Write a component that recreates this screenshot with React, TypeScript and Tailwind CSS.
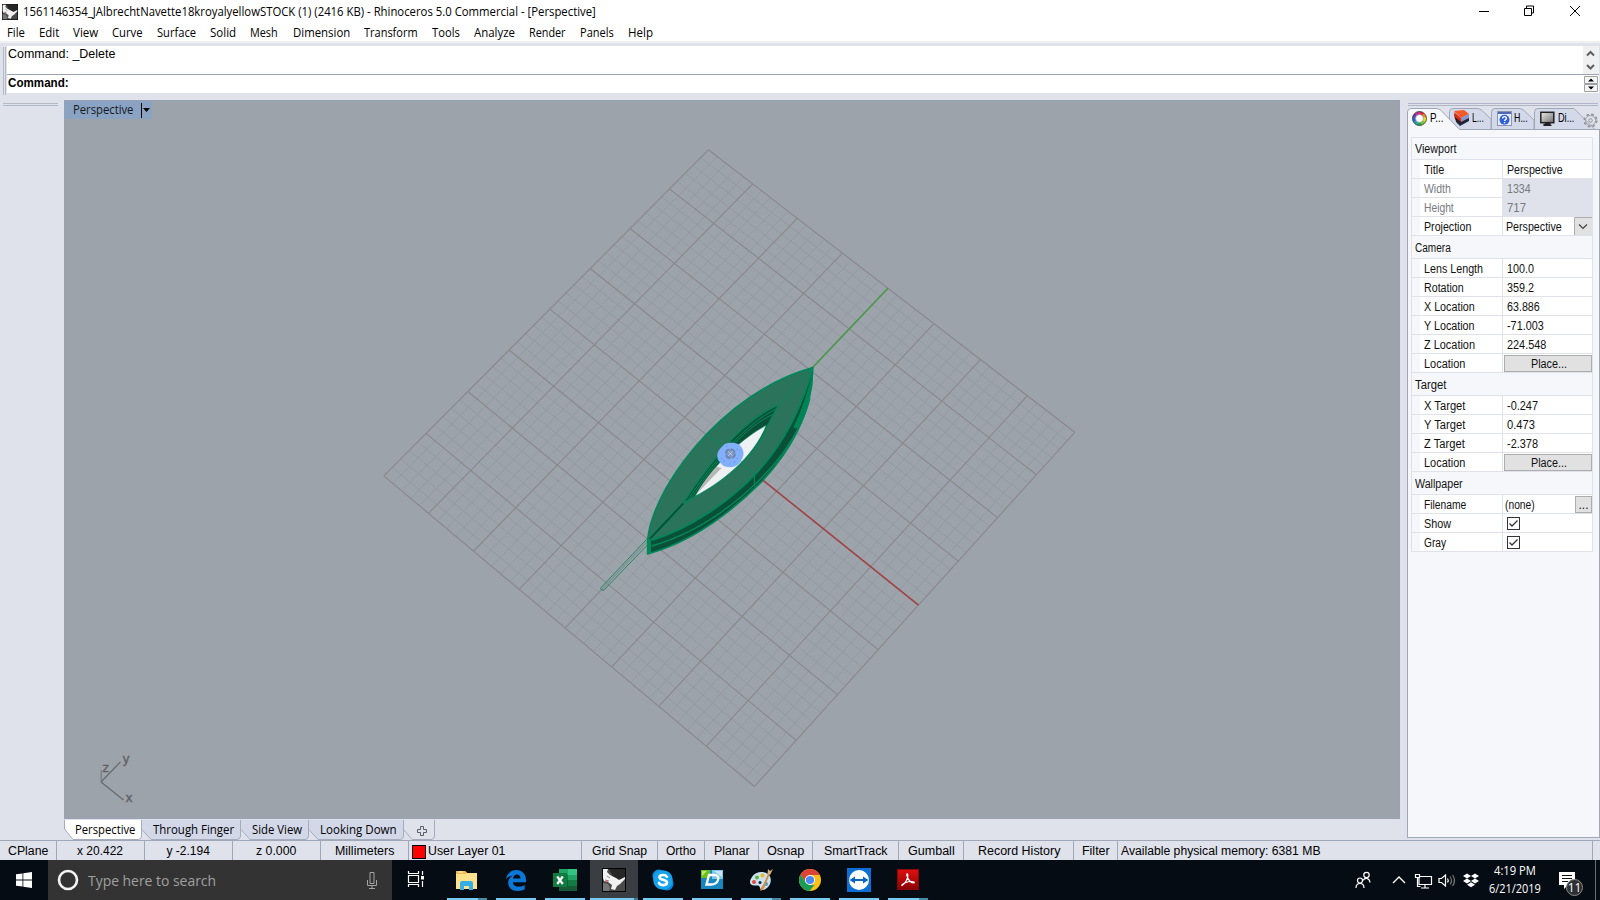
import React, { useLayoutEffect, useRef, useState } from "react";

const UI = "font-['Open_Sans','Noto_Sans',sans-serif]";
const ARIAL = "font-['Liberation_Sans',Arial,sans-serif]";

/* One line of text that is condensed or widened to a given advance width. */
function Label({ w, className = "", children }: { w: number; className?: string; children: string }) {
  const ref = useRef<HTMLSpanElement>(null);
  const [k, setK] = useState(1);
  useLayoutEffect(() => {
    if (ref.current) setK(w / ref.current.offsetWidth);
  }, [w, children]);
  return (
    <span className={"inline-block shrink-0 whitespace-nowrap " + className} style={{ width: w }}>
      <span ref={ref} className="inline-block origin-left" style={{ transform: `scaleX(${k})` }}>
        {children}
      </span>
    </span>
  );
}

/* ---------- icons ---------- */
function RhinoIcon({ size }: { size: number }) {
  return (
    <svg width={size} height={size} viewBox="0 0 24 24" className="shrink-0">
      <rect width="24" height="24" fill="#050505" />
      <rect x="1" y="1" width="22" height="22" fill="#4a4a4a" />
      <path d="M7 1H23V12L12 11Z" fill="#262626" />
      <path d="M1 1H6L5 4L8 7L14 10L17 12L23 9V11L18 16L15 18L13 22L9 21L10 17L6 14L2 13L1 10Z" fill="#f1f1f1" />
      <path d="M1 15L6 16L8 20L7 23H1Z" fill="#777" />
      <path d="M3 12l4 1M5 8l3 2" stroke="#8b8b8b" fill="none" />
      <circle cx="5" cy="13" r="1" fill="#d66" />
    </svg>
  );
}
const ColorRing = () => (
  <svg width="15" height="15" viewBox="-7.5 -7.5 15 15" fill="none" strokeWidth="3" className="shrink-0">
    {["#e8262a", "#f08a1c", "#f3e01c", "#7ccb28", "#1fa94a", "#18a5b8", "#2a5bd0", "#6a36b8", "#c02a9a"].map((c, i) => (
      <path key={c} d="M0 -5.5A5.5 5.5 0 0 1 3.8 -4" stroke={c} transform={`rotate(${i * 40})`} />
    ))}
    <circle r="7" stroke="#333" strokeWidth=".8" />
    <circle r="4" fill="#fff" stroke="#555" strokeWidth=".5" />
  </svg>
);
const LayersIcon = () => (
  <svg width="16" height="16" viewBox="0 0 16 16" className="shrink-0">
    <path d="M1 7L6 12L15 8V11L6 16L2 12Z" fill="#1d2740" />
    <path d="M0 4L6 9L15 5V9L6 13L1 9Z" fill="#3a1410" />
    <path d="M0 1L10 0L15 4L7 8Z" fill="#f25a2a" />
    <path d="M0 2L7 8V12L1 7Z" fill="#d92c14" />
    <path d="M7 8L15 4V8L7 12Z" fill="#8199d0" />
  </svg>
);
const HelpIcon = () => (
  <svg width="15" height="15" viewBox="0 0 15 15" className="shrink-0">
    <rect x=".5" y=".5" width="14" height="14" fill="#e8eefb" stroke="#8a94b0" />
    <rect x="1" y="1" width="13" height="2" fill="#4c66b8" />
    <circle cx="7.5" cy="8.7" r="5" fill="#2f5fd8" />
    <path d="M5.6 7.4C5.6 5 9.4 5 9.4 7.3C9.4 8.7 7.6 8.5 7.6 10M7.6 11v1.3" fill="none" stroke="#fff" strokeWidth="1.4" />
  </svg>
);
const MonitorIcon = () => (
  <svg width="15" height="15" viewBox="0 0 15 15" className="shrink-0">
    <defs>
      <linearGradient id="mon" x1="0" y1="0" x2="1" y2="1">
        <stop offset="0" stopColor="#eee" />
        <stop offset="1" stopColor="#6d6d6d" />
      </linearGradient>
    </defs>
    <rect x=".8" y="1.3" width="13" height="10.4" fill="url(#mon)" stroke="#222" strokeWidth="1.5" />
    <path d="M5 12.3h5v1H4v1h7.5" fill="none" stroke="#222" strokeWidth="1.2" />
  </svg>
);
const GearIcon = () => (
  <svg width="15" height="15" viewBox="-7.5 -7.5 15 15" fill="none" stroke="#8f9196" className="shrink-0">
    <circle r="6.2" strokeWidth="1.6" strokeDasharray="2.6 2.27" />
    <circle r="5" strokeWidth=".8" />
    <circle r="1.8" />
  </svg>
);

/* ---------- top ---------- */
function TitleBar() {
  return (
    <div className={`flex h-[23px] items-center bg-white pl-[2px] text-[12px] text-black ${UI}`}>
      <RhinoIcon size={16} />
      <Label w={573} className="ml-[5px]">
        1561146354_JAlbrechtNavette18kroyalyellowSTOCK (1) (2416 KB) - Rhinoceros 5.0 Commercial - [Perspective]
      </Label>
      <svg width="106" height="20" viewBox="1474 0 106 20" className="mr-[20px] ml-auto" fill="none" stroke="#000">
        <path d="M1479 9.500h10M1524.500 6.500h7v7h-7zM1526.500 6v-2h7v7h-2M1570 4l10 10M1580 4l-10 10" />
      </svg>
    </div>
  );
}

const menu: [string, number, number][] = [
  ["File", 7, 18], ["Edit", 39, 20], ["View", 73, 25], ["Curve", 112, 31], ["Surface", 157, 39],
  ["Solid", 210, 26], ["Mesh", 250, 28], ["Dimension", 293, 57], ["Transform", 364, 54], ["Tools", 432, 28],
  ["Analyze", 474, 41], ["Render", 529, 37], ["Panels", 580, 34], ["Help", 628, 25],
];
function MenuBar() {
  return (
    <div className={`flex h-[18px] items-center bg-white pt-px text-[12px] leading-[17px] text-black ${UI}`}>
      {menu.map(([t, x, w], i) => {
        const prev = i ? menu[i - 1][1] + menu[i - 1][2] : 0;
        return (
          <div key={t} className="flex shrink-0" style={{ paddingLeft: x - prev }}>
            <Label w={w}>{t}</Label>
          </div>
        );
      })}
    </div>
  );
}

function CommandArea() {
  return (
    <div className="flex h-[59px] flex-col border-t-2 border-[#f0f0f0]">
      <div className="mt-[3px] flex h-[49px]">
        <div className="mt-px ml-[3px] h-[48px] w-[3px] shrink-0 border-x border-[#b4b9c6]" />
        <div className={`ml-[1px] flex w-[1592px] flex-col text-[12px] text-black ${ARIAL}`}>
          <div className="flex h-[28px] justify-between bg-white">
            <Label w={107} className="ml-[1px] leading-[17px]">Command: _Delete</Label>
            <svg width="16" height="28" viewBox="0 0 16 28" className="bg-[#f0f0f0]" fill="none" stroke="#606060" strokeWidth="2">
              <path d="M4 9.500L7.500 6L11 9.500M4 19L7.500 22.500L11 19" />
            </svg>
          </div>
          <div className="flex h-[19px] justify-between border-t border-[#98a2b0] bg-white">
            <Label w={61} className="ml-[1px] font-bold leading-[17px]">Command:</Label>
            <svg width="16" height="18" viewBox="0 0 16 18">
              <path d="M1.500 1.500h13v7h-13zM1.500 9.500h13v7h-13z" fill="#f4f4f4" stroke="#a0a0a0" />
              <path d="M5 6.500h6L8 3.500zM5 11.500h6L8 14.500z" fill="#000" />
            </svg>
          </div>
        </div>
      </div>
    </div>
  );
}

/* ---------- viewport ---------- */
/* Projects the unit square onto the quadrilateral p0 (0,0), p1 (1,0), p2 (1,1), p3 (0,1). */
type P = [number, number];
function projector(p0: P, p1: P, p2: P, p3: P) {
  const dx1 = p1[0] - p2[0], dx2 = p3[0] - p2[0], dx3 = p0[0] - p1[0] + p2[0] - p3[0];
  const dy1 = p1[1] - p2[1], dy2 = p3[1] - p2[1], dy3 = p0[1] - p1[1] + p2[1] - p3[1];
  const det = dx1 * dy2 - dx2 * dy1;
  const g = (dx3 * dy2 - dx2 * dy3) / det, h = (dx1 * dy3 - dx3 * dy1) / det;
  const a = p1[0] - p0[0] + g * p1[0], b = p3[0] - p0[0] + h * p3[0];
  const d = p1[1] - p0[1] + g * p1[1], e = p3[1] - p0[1] + h * p3[1];
  return (u: number, v: number): P => {
    const q = g * u + h * v + 1;
    return [(a * u + b * v + p0[0]) / q, (d * u + e * v + p0[1]) / q];
  };
}
const project = projector([383.8, 475.9], [754.4, 786.5], [1074.8, 432.3], [708.4, 149.8]);
const seg = (u1: number, v1: number, u2: number, v2: number) => {
  const [x1, y1] = project(u1, v1);
  const [x2, y2] = project(u2, v2);
  return `M${x1.toFixed(2)} ${y1.toFixed(2)}L${x2.toFixed(2)} ${y2.toFixed(2)}`;
};
const steps = Array.from({ length: 41 }, (_, i) => i);
const lines = (major: boolean) =>
  steps.filter((i) => (i % 5 === 0) === major).map((i) => seg(i / 40, 0, i / 40, 1) + seg(0, i / 40, 1, i / 40)).join("");

function Model() {
  return (
    <g transform="translate(580 340) scale(.33333)" fill="none" strokeLinejoin="round">
      <path d="M200 598L63 743Q60 752 72 750L205 612" stroke="#1d8a60" strokeWidth="3" />
      <path d="M203 604L72 743" stroke="#6f9a8c" strokeWidth="2" />
      <path d="M698 83C700 220 625 340 545 425C440 530 330 607 203 642L203 597Z" fill="#0a5038" stroke="#00875a" strokeWidth="5" />
      <path d="M690 175C665 270 610 350 530 428C440 515 330 585 215 618" stroke="#058a5b" strokeWidth="4" />
      <path d="M698 90C698 150 685 212 655 268L640 262C668 205 685 150 698 90Z" fill="#008456" />
      <path d="M698 83C560 122 460 200 380 282C285 382 215 500 203 597L218 600C330 565 440 490 523 406C600 325 660 225 698 83Z" fill="#2c735b" stroke="#00875a" strokeWidth="5" />
      <path d="M595 195C520 225 450 300 412 348C370 402 335 445 310 490L345 470C430 425 530 345 560 262Z" fill="#0a5038" stroke="#058458" strokeWidth="4" />
      <path d="M577 224C500 260 410 355 330 482M586 208C500 250 400 360 320 486" stroke="#058a5b" strokeWidth="3" />
      <path d="M559 256C500 285 400 370 345 469C420 430 520 355 559 256Z" fill="#eef1f3" stroke="#058458" strokeWidth="2" />
      <path d="M410 380C385 408 365 435 350 462L395 415L425 384Z" fill="#b9b7b5" />
      <path d="M310 490L207 600" stroke="#0a5038" strokeWidth="6" />
      <path d="M302 490L207 590M314 496L214 598M698 83L595 195M380 282L432 322M482 364L523 404V440" stroke="#058a5b" strokeWidth="3" />
      <path d="M208 596V640" stroke="#00875a" strokeWidth="10" />
      <path d="M432 314C440 307 465 306 478 314C495 330 494 350 480 366C470 385 437 387 424 372C405 352 408 334 432 314Z" fill="#82b0fa" />
      <circle cx="451" cy="341" r="14" fill="#7f95ba" stroke="#6a84b4" strokeWidth="5" strokeDasharray="16 6" />
      <path d="M444 334l14 14M458 334l-14 14" stroke="#b4cdf8" strokeWidth="3" />
      <path d="M470 328h4M478 332h3M424 355h3M430 364h4M462 366h4M438 320h3M470 356h3M448 372h3" stroke="#5f8edb" strokeWidth="3" />
    </g>
  );
}

function Viewport() {
  return (
    <div className="relative h-[719px] w-[1336px] shrink-0 border border-[#98a1b3] bg-[#9da3ab]">
      <svg width="1334" height="717" viewBox="65 101 1334 717" fill="none">
        <path d={lines(false)} stroke="#949aa1" strokeWidth="1" />
        <path d={lines(true)} stroke="#89868d" strokeWidth="1.1" />
        <path d={seg(0.5, 0.5, 1, 0.5)} stroke="#a04344" strokeWidth="1.6" />
        <path d={seg(0.5, 0.5, 0.5, 1)} stroke="#4a9a48" strokeWidth="1.6" />
        <Model />
        <path d="M101.300 782V770" stroke="#7f8287" strokeWidth="1.600" />
        <path d="M101 782L120.500 761.800M101 782L123.500 800" stroke="#66696e" strokeWidth="1.200" />
        <g className="font-['DejaVu_Sans',sans-serif] text-[12px]" fill="#5f6267" stroke="#5f6267" strokeWidth=".4">
          <text x="122.500" y="763">y</text>
          <text x="102.500" y="772">z</text>
          <text x="125.500" y="802">x</text>
        </g>
      </svg>
      <div className={`absolute top-0 left-0 flex h-[18px] w-[87px] items-center bg-[#8aa3c3] text-[12px] text-[#15181d] ${UI}`}>
        <Label w={60} className="ml-[8px] leading-[16px]">Perspective</Label>
        <svg width="10" height="16" viewBox="0 0 10 16" className="ml-[8px]">
          <path d="M.500 1v15" stroke="#000" />
          <path d="M2 6h7L5.500 10z" fill="#000" />
        </svg>
      </div>
    </div>
  );
}

const viewTabs: [string, number, number][] = [
  ["Perspective", 78, 60], ["Through Finger", 99, 81], ["Side View", 68, 50], ["Looking Down", 95, 77],
];
function ViewTabs() {
  return (
    <div className={`mt-px flex h-[20px] text-[12px] text-black ${UI}`}>
      {viewTabs.map(([t, w, tw], i) => (
        <div key={t} className="relative flex h-[20px] shrink-0 justify-end" style={{ width: w }}>
          <svg width={w} height="20" className="absolute inset-0" fill="none">
            <path
              d={`M${i ? 0 : 0.5} 0V8L${i ? 9 : 8.5} 19.500H${w - 4}Q${w - 0.5} 19.500 ${w - 0.5} 16V0Z`}
              fill={i ? "#d3d8e8" : "#fff"}
            />
            <path d={`M${i ? -0.5 : 0.5} ${i ? 10 : 0}V9L9 19.500H${w - 4}Q${w - 0.5} 19.500 ${w - 0.5} 16V0`} stroke="#a5acbb" />
          </svg>
          <Label w={tw} className="relative mr-[7px] leading-[20px]">{t}</Label>
        </div>
      ))}
      <svg width="31" height="20" viewBox="0 0 31 20" fill="none" stroke="#a5acbb">
        <path d="M0 10L8 19.500H27Q30.500 19.500 30.500 16V0" />
        <path d="M16.500 6.500h3v3h3v3h-3v3h-3v-3h-3v-3h3z" stroke="#5a5d62" />
      </svg>
    </div>
  );
}

/* ---------- properties panel ---------- */
function PanelTabs() {
  return (
    <div className="relative h-[22px]">
      <svg width="193" height="22" viewBox="1407 108 193 22" className="absolute inset-0" fill="#d3d9e9" stroke="#a0a8b8">
        <path d="M1534.500 130V112Q1534.500 108.500 1538 108.500H1574L1595 129.500" />
        <path d="M1491.500 130V112Q1491.500 108.500 1495 108.500H1519Q1522 108.500 1524 110.500L1534 120V130" />
        <path d="M1449.500 130V112Q1449.500 108.500 1453 108.500H1477Q1480 108.500 1482 110.500L1491 119V130" />
        <path d="M1400 129.500H1600" />
        <path d="M1407.500 131V112Q1407.500 108.500 1411 108.500H1436Q1439 108.500 1441 110.500L1459.500 129.500L1460 131" fill="#f6f7fa" />
      </svg>
      <div className={`relative flex h-[20px] items-center pl-px text-[12px] text-black ${ARIAL}`}>
        <div className="flex w-[42px] items-center gap-[3px] pl-[4px]"><ColorRing /><Label w={13}>P...</Label></div>
        <div className="flex w-[42px] items-center gap-[2px] pl-[4px]"><LayersIcon /><Label w={12}>L...</Label></div>
        <div className="flex w-[42px] items-center gap-[2px] pl-[5px]"><HelpIcon /><Label w={14}>H...</Label></div>
        <div className="flex w-[49px] items-center gap-[3px] pl-[6px]"><MonitorIcon /><Label w={16}>Di...</Label></div>
        <div className="flex pt-[5px]"><GearIcon /></div>
      </div>
    </div>
  );
}

type Row = { l: string; lw: number; v?: string; vw?: number; kind?: "gray" | "combo" | "button" | "file" | "check" };
const groups: { name: string; w: number; rows: Row[] }[] = [
  {
    name: "Viewport", w: 41, rows: [
      { l: "Title", lw: 20, v: "Perspective", vw: 56 },
      { l: "Width", lw: 27, v: "1334", vw: 24, kind: "gray" },
      { l: "Height", lw: 30, v: "717", vw: 19, kind: "gray" },
      { l: "Projection", lw: 47, v: "Perspective", vw: 56, kind: "combo" },
    ],
  },
  {
    name: "Camera", w: 36, rows: [
      { l: "Lens Length", lw: 59, v: "100.0", vw: 27 },
      { l: "Rotation", lw: 40, v: "359.2", vw: 27 },
      { l: "X Location", lw: 51, v: "63.886", vw: 33 },
      { l: "Y Location", lw: 51, v: "-71.003", vw: 37 },
      { l: "Z Location", lw: 51, v: "224.548", vw: 39 },
      { l: "Location", lw: 41, v: "Place...", vw: 36, kind: "button" },
    ],
  },
  {
    name: "Target", w: 31, rows: [
      { l: "X Target", lw: 41, v: "-0.247", vw: 31 },
      { l: "Y Target", lw: 41, v: "0.473", vw: 28 },
      { l: "Z Target", lw: 41, v: "-2.378", vw: 31 },
      { l: "Location", lw: 41, v: "Place...", vw: 36, kind: "button" },
    ],
  },
  {
    name: "Wallpaper", w: 48, rows: [
      { l: "Filename", lw: 42, v: "(none)", vw: 30, kind: "file" },
      { l: "Show", lw: 27, kind: "check" },
      { l: "Gray", lw: 22, kind: "check" },
    ],
  },
];

function Value({ r }: { r: Row }) {
  const text = r.v ? <Label w={r.vw!}>{r.v}</Label> : null;
  switch (r.kind) {
    case "gray":
      return <div className="flex h-[19px] flex-1 items-center bg-[#dfe2eb] pl-[4px] text-[#76797e]">{text}</div>;
    case "combo":
      return (
        <div className="flex flex-1 items-center justify-between pl-[3px]">
          <div className="flex pt-[2px]">{text}</div>
          <svg width="18" height="18" viewBox="0 0 18 18">
            <path d="M1 1H18V18H1z" fill="#e1e1e1" />
            <path d="M.500 18V.500H18" fill="none" stroke="#adadad" />
            <path d="M5 7.500L9 11.500L13 7.500" fill="none" stroke="#444" strokeWidth="1.200" />
          </svg>
        </div>
      );
    case "button":
      return (
        <div className="mt-px ml-[1px] flex h-[17px] flex-1 items-center justify-center border border-[#adadad] bg-[#e1e1e1]">
          <div className="flex pl-[2px]">{text}</div>
        </div>
      );
    case "file":
      return (
        <div className="flex flex-1 items-center justify-between pl-[2px]">
          <div className="flex pt-[2px]">{text}</div>
          <div className="mt-px flex h-[17px] w-[17px] items-center justify-center border border-[#adadad] bg-[#e1e1e1] leading-[10px]">...</div>
        </div>
      );
    case "check":
      return (
        <svg width="13" height="13" viewBox="0 0 13 13" className="mt-[3px] ml-[4px]" fill="none" stroke="#333">
          <rect x=".5" y=".5" width="12" height="12" fill="#fff" />
          <path d="M2.500 6.500L5 9L10.500 3.500" strokeWidth="1.300" />
        </svg>
      );
    default:
      return <div className="flex flex-1 items-center pt-[2px] pl-[4px]">{text}</div>;
  }
}

function PropertiesPanel() {
  return (
    <div className="mt-[3px] ml-[7px] flex h-[735px] w-[193px] flex-col">
      <div className="mb-[2px] ml-px h-[3px] w-[190px] border-y border-[#b0b6c6]" />
      <PanelTabs />
      <div className={`h-[708px] w-[193px] border-x border-b border-[#a0a8b8] bg-[#f6f7fa] pt-[7px] pl-[3px] text-[12px] leading-[14px] text-[#111] ${ARIAL}`}>
        <div className="w-[182px] border-x border-t border-[#dfe2eb]">
          {groups.map((g, gi) => (
            <div key={g.name}>
              <div className={(gi ? "h-[23px] pt-[2px]" : "h-[22px]") + " flex items-center border-b border-[#dfe2eb] pl-[3px]"}>
                <Label w={g.w}>{g.name}</Label>
              </div>
              {g.rows.map((r) => (
                <div key={r.l} className="flex h-[19px] border-b border-[#dfe2eb]">
                  <div className="w-[8px] shrink-0" />
                  <div className={"flex w-[83px] shrink-0 items-center border-r border-[#dfe2eb] bg-white pt-[2px] pl-[4px]" + (r.kind === "gray" ? " text-[#76797e]" : "")}>
                    <Label w={r.lw}>{r.l}</Label>
                  </div>
                  <div className="flex flex-1 bg-white"><Value r={r} /></div>
                </div>
              ))}
            </div>
          ))}
        </div>
      </div>
    </div>
  );
}

/* ---------- status bar ---------- */
const cells: [string, number, number][] = [
  ["CPlane", 57, 40], ["x 20.422", 88, 46], ["y -2.194", 88, 43], ["z 0.000", 88, 40], ["Millimeters", 88, 59],
  ["User Layer 01", 173, 77], ["Grid Snap", 76, 55], ["Ortho", 47, 30], ["Planar", 54, 36], ["Osnap", 54, 37],
  ["SmartTrack", 86, 64], ["Gumball", 65, 47], ["Record History", 110, 82], ["Filter", 44, 28],
  ["Available physical memory: 6381 MB", 475, 200],
];
function StatusBar() {
  return (
    <div className={`flex h-[20px] border-t border-[#a0a8b8] text-[12px] text-black ${ARIAL}`}>
      {cells.map(([t, w, tw], i) => {
        const layer = t.startsWith("User");
        const left = layer || t.startsWith("Avail");
        return (
          <div
            key={t}
            className={"flex shrink-0 items-center border-r border-[#a0a8b8] " + (left ? "pl-[3px]" : i < 5 ? "justify-center pr-px" : "justify-center")}
            style={{ width: w }}
          >
            {layer && <div className="mt-[3px] mr-[2px] h-[14px] w-[14px] border border-black bg-[#f00]" />}
            <Label w={tw}>{t}</Label>
          </div>
        );
      })}
    </div>
  );
}

/* ---------- taskbar ---------- */
const Explorer = () => (
  <svg width="24" height="24" viewBox="0 0 24 24">
    <path d="M1 3h9l2 2h10v16H1z" fill="#ffe08c" />
    <path d="M1 3h9l2 2-2 1H1z" fill="#f5b942" />
    <path d="M3 4h5" stroke="#fff" />
    <path d="M5 22v-7q0-2 2-2h9q2 0 2 2v7h-4v-4h-5v4z" fill="#35b0e6" />
  </svg>
);
const Edge = () => (
  <svg width="24" height="24" viewBox="0 0 24 24">
    <path
      d="M2 11.500C3 5.500 7 2 12.300 2C18.500 2 22 6.500 22 12V14.300H8.800C9 17.300 11.600 18.700 14.500 18.700C17 18.700 19 18 20.700 17V21.300C18.800 22.300 16.500 23 13.700 23C8 23 4.200 19.500 4.200 14.500C4.200 11.500 6 9 8.500 7.700C5.500 8 3.200 9.500 2 11.500ZM9 10.500H16.500C16.500 8 15 6.600 12.900 6.600C10.700 6.600 9.300 8.300 9 10.500Z"
      fill="#0a78d7"
    />
  </svg>
);
const Excel = () => (
  <svg width="24" height="24" viewBox="0 0 24 24">
    <path d="M6 1h9v6H6z" fill="#21a366" /><path d="M15 1h9v6h-9z" fill="#33c481" />
    <path d="M6 7h9v6H6z" fill="#107c41" /><path d="M15 7h9v5h-9z" fill="#21a366" />
    <path d="M6 12h9v11H6z" fill="#185c37" /><path d="M15 12h9v6h-9z" fill="#107c41" /><path d="M15 18h9v5h-9z" fill="#185c37" />
    <rect y="5" width="14" height="14" fill="#107c41" />
    <path d="M4.200 8.500l5.600 7.500M9.800 8.500l-5.600 7.500" stroke="#fff" strokeWidth="2.200" />
  </svg>
);
const Skype = () => (
  <svg width="24" height="24" viewBox="0 0 24 24">
    <circle cx="8" cy="8" r="6.500" fill="#1292e0" /><circle cx="16" cy="16" r="6.500" fill="#0a86dc" />
    <circle cx="12" cy="12" r="9.800" fill="#14a3ec" />
    <path d="M15.800 8.700C14.500 6.400 8.500 6.300 8.500 9.300C8.500 12.600 16 11 16 14.600C16 18 9.300 17.800 8 15" fill="none" stroke="#fff" strokeWidth="2.700" strokeLinecap="round" />
  </svg>
);
const Designer = () => (
  <svg width="24" height="24" viewBox="0 0 24 24">
    <rect x="1" y="2" width="22" height="19" fill="#1a86c0" />
    <path d="M12 2h11v9H12z" fill="#7cc8e8" /><path d="M14 3h8v6z" fill="#c6e8f6" />
    <rect x="1" y="2" width="9" height="8" fill="#6bbf1e" /><path d="M2 3h5l-5 5z" fill="#b8ec6a" />
    <path d="M9 7H14C18 7 19 9 18 12C17 15 14.500 16.500 11 16.500H6.500Z" fill="none" stroke="#fff" strokeWidth="2.300" />
  </svg>
);
const Paint = () => (
  <svg width="24" height="24" viewBox="0 0 24 24">
    <path d="M3 9C6 4 15 2 20 7C24 12 21 20 14 22C10 22.500 12 18 9 17.500C6 17.500 1 18 1 14C1 12 2 10.500 3 9Z" fill="#c9e2f2" />
    <circle cx="5" cy="14" r="2" fill="#e2483c" /><circle cx="8" cy="9.500" r="2" fill="#5cb531" /><circle cx="13.500" cy="7.500" r="2" fill="#f0b429" />
    <circle cx="11" cy="14.500" r="1.500" fill="#14243a" /><circle cx="17" cy="16" r="2" fill="#3aa0dc" />
    <path d="M11.500 23C11 20 13 19 14.500 16L19 6L20.500 6.500L16.500 17C15.500 20 14 22 11.500 23Z" fill="#d98a3c" />
    <path d="M18.500 6L19 1L21 3L24 1L22.500 4L21 7Z" fill="#d8b078" />
  </svg>
);
const Chrome = () => (
  <svg width="24" height="24" viewBox="-12 -12 24 24">
    <circle r="11" fill="#fbc116" />
    <path d="M-9.530 -5.500A11 11 0 0 1 9.530 -5.500L10 -5H0L-4.330 2.500Z" fill="#dc4437" />
    <path d="M-9.530 -5.500L-4.330 2.500L0 5H4.500L-.5 11A11 11 0 0 1 -9.530 -5.500Z" fill="#1a9c56" />
    <circle r="5" fill="#fff" /><circle r="4.100" fill="#4a8af4" />
  </svg>
);
const TeamViewer = () => (
  <svg width="24" height="24" viewBox="0 0 24 24">
    <rect width="24" height="24" fill="#0b6fd6" /><circle cx="12" cy="12" r="10" fill="#fff" />
    <path d="M2.500 12L8 8.500V11H16V8.500L21.500 12L16 15.500V13H8V15.500Z" fill="#0b63c4" />
  </svg>
);
const Acrobat = () => (
  <svg width="24" height="24" viewBox="0 0 24 24">
    <defs><linearGradient id="acr" x1="0" y1="0" x2="0" y2="1"><stop offset="0" stopColor="#e01010" /><stop offset="1" stopColor="#8a0000" /></linearGradient></defs>
    <rect x="1.500" y="1.500" width="21" height="20" fill="url(#acr)" stroke="#8c0808" />
    <path d="M6 17.500C9 16 12.500 10 11.800 6.500C11.300 5 10.300 6 11 8C12 12 15 15 18 15C19 14.500 18 13.300 15 13.500C12 13.700 8 15 6.300 16.500C5.500 17.500 5.700 17.700 6 17.500Z" fill="none" stroke="#fff" strokeWidth="1.200" />
  </svg>
);

const apps: { icon: React.ReactNode; w: number; bar: number; dim?: boolean; active?: boolean }[] = [
  { icon: <Explorer />, w: 49, bar: 40, dim: true },
  { icon: <Edge />, w: 49, bar: 40 },
  { icon: <Excel />, w: 45, bar: 40 },
  { icon: <RhinoIcon size={24} />, w: 53, bar: 48, active: true },
  { icon: <Skype />, w: 49, bar: 40 },
  { icon: <Designer />, w: 49, bar: 40 },
  { icon: <Paint />, w: 49, bar: 40, dim: true },
  { icon: <Chrome />, w: 49, bar: 40 },
  { icon: <TeamViewer />, w: 49, bar: 40 },
  { icon: <Acrobat />, w: 49, bar: 40, dim: true },
];

function Taskbar() {
  return (
    <div className={`flex h-[40px] bg-[#060c14] ${UI}`}>
      <div className="flex w-[48px] items-center justify-center">
        <svg width="16" height="16" viewBox="0 0 16 16" fill="#fff">
          <path d="M0 2.300L6.500 1.400V7.600H0zM7.300 1.300L16 0V7.600H7.300zM0 8.400H6.500V14.600L0 13.700zM7.300 8.400H16V16L7.300 14.700z" />
        </svg>
      </div>
      <div className="flex w-[344px] items-center bg-[#333] pr-[12px] pl-[9px]">
        <svg width="22" height="22" viewBox="0 0 22 22" fill="none"><circle cx="11" cy="11" r="9" stroke="#f4f4f4" strokeWidth="2.600" /></svg>
        <Label w={128} className="ml-[9px] text-[15px] leading-[20px] text-[#a0a0a0]">Type here to search</Label>
        <svg width="16" height="18" viewBox="0 0 16 18" className="mt-[-1px] ml-auto" fill="none" stroke="#a4a4a4">
          <path d="M6 1.500h4v11H6zM3.500 9v5.500h9V9M8 14.500V17M5 17.500h6" />
        </svg>
      </div>
      <div className="flex w-[55px] items-center pl-[15px]">
        <svg width="18" height="18" viewBox="0 0 18 18" className="mt-[-2px]" fill="none" stroke="#fff" strokeWidth="1.200">
          <path d="M1.500 1v2.500h10V1M1.500 5.500h10v7h-10zM1.500 17v-2.500h10V17M15.500 1v4M15.500 11v6" /><path d="M14 6h3v3.500h-3z" fill="#fff" stroke="none" />
        </svg>
      </div>
      {apps.map((a, i) => (
        <div key={i} className="h-[40px] shrink-0" style={{ width: a.w }}>
          <div className={"flex h-[40px] flex-col " + (a.active ? "bg-[#3a3d42]" : "")} style={{ width: a.bar }}>
            <div className="flex flex-1 justify-center pt-[8px]">{a.icon}</div>
            <div className="flex h-[2px]">
              <div className="flex-1 bg-[#76cbf3]" />
              {a.dim && <div className="w-[9px] bg-[#4a8aa6]" />}
              {a.active && <div className="w-[4px] bg-[#3f7690]" />}
            </div>
          </div>
        </div>
      ))}
      <div className="ml-auto flex h-[40px] items-center text-white">
        <svg width="128" height="24" viewBox="1355 868 128 24" fill="none" stroke="#fff" strokeWidth="1.200">
          <circle cx="1360" cy="880.500" r="2.500" /><path d="M1356 888C1356 882 1364 882 1364 888" />
          <circle cx="1366.500" cy="875" r="2.700" /><path d="M1363 880.500C1365 877 1369.500 878 1370 882.500" />
          <path d="M1393 883L1399 877L1405 883" strokeWidth="1.400" />
          <path d="M1420 876.500H1431.500V884.500H1419V878M1415.500 874.500h4v3h-4zM1417.500 878v8.500h3M1425 885v3M1421 888h8" />
          <path d="M1439 878.500h2.500l4-3.500v11l-4-3.500H1439z" /><path d="M1447.500 878.500q1.500 2 0 4" />
          <path d="M1450 876.500q3 4 0 8M1452.500 875q4 5.500 0 11" stroke="#777" />
          <path d="M1463 876l4-2.500 4 2.500-4 2.500zM1471 876l4-2.500 4 2.500-4 2.500zM1463 881l4-2.500 4 2.500-4 2.500zM1471 881l4-2.500 4 2.500-4 2.500zM1467 884.800l4-2.500 4 2.500-4 2.500z" fill="#fff" stroke="none" />
        </svg>
        <div className="ml-[6px] flex w-[52px] flex-col items-center text-[12px] leading-[18px]">
          <Label w={42}>4:19 PM</Label>
          <Label w={52}>6/21/2019</Label>
        </div>
        <div className="relative ml-[18px] h-[40px] w-[37px] border-r border-[#6a6e73]">
          <svg width="17" height="17" viewBox="0 0 17 17" className="absolute top-[12px] left-0">
            <path d="M0 0H16V13H9L5 17V13H0z" fill="#fff" /><path d="M3 3.500h10M3 6.500h10M3 9.500h6" stroke="#111" />
          </svg>
          <div className="absolute top-[19px] left-[7px] flex h-[17px] w-[17px] items-center justify-center rounded-full border border-[#8b8b8b] bg-[#2d2f32] text-[12px] leading-[14px]">11</div>
        </div>
        <div className="w-[4px]" />
      </div>
    </div>
  );
}

export default function App() {
  return (
    <div className="flex h-[900px] w-[1600px] flex-col overflow-hidden bg-[#dfe2eb]">
      <TitleBar />
      <MenuBar />
      <CommandArea />
      <div className="flex h-[740px]">
        <div className="w-[64px] shrink-0 pt-[3px] pl-[3px]">
          <div className="h-[3px] w-[55px] border-y border-[#b4b9c6]" />
        </div>
        <div className="flex w-[1336px] shrink-0 flex-col">
          <Viewport />
          <ViewTabs />
        </div>
        <PropertiesPanel />
      </div>
      <StatusBar />
      <Taskbar />
    </div>
  );
}
